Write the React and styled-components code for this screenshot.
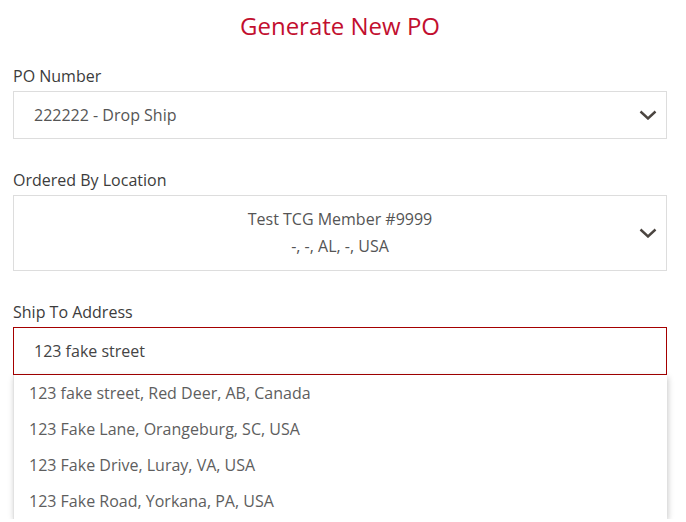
import React from "react";
import styled, { createGlobalStyle } from "styled-components";

const GlobalStyle = createGlobalStyle`
  body {
    margin: 0;
    background: #fff;
    font-family: "Open Sans", "Liberation Sans", sans-serif;
  }
`;

const Page = styled.div`
  padding: 10px 19px 0 13px;
`;

const Title = styled.h1`
  margin: 0 0 23px;
  font-size: 24px;
  line-height: 32px;
  font-weight: 400;
  text-align: center;
  color: #c20f2f;
`;

const Field = styled.div`
  margin-bottom: 30px;
`;

const Label = styled.div`
  font-size: 16px;
  line-height: 22px;
  color: #3c3c3c;
  margin-bottom: 4px;
`;

const Select = styled.div`
  position: relative;
  display: flex;
  align-items: center;
  justify-content: ${({ $center }) => ($center ? "center" : "flex-start")};
  border: 1px solid #ddd;
  padding: ${({ $center }) => ($center ? "10px 40px" : "0 40px 0 20px")};
  height: ${({ $center }) => ($center ? "auto" : "46px")};
  font-size: 16px;
  line-height: 27px;
  color: #555;
`;

const Lines = styled.div`
  text-align: center;
`;

const Chevron = styled.svg`
  position: absolute;
  right: 9px;
  top: 50%;
  margin-top: -5px;
`;

const AutoWrap = styled.div`
  position: relative;
`;

const Input = styled.input`
  display: block;
  box-sizing: border-box;
  width: 100%;
  height: 48px;
  border: 1px solid #a50000;
  padding: 0 20px;
  font-family: inherit;
  font-size: 16px;
  color: #444;
  outline: none;
`;

const Menu = styled.ul`
  list-style: none;
  margin: 0;
  padding: 0;
  border-left: 1px solid #e2e2e2;
  box-shadow: 1px 2px 6px rgba(0, 0, 0, 0.22);
  background: #fff;
`;

const Option = styled.li`
  height: 36px;
  line-height: 36px;
  padding-left: 15px;
  font-size: 16px;
  color: #5e5e5e;
`;

const ChevronIcon = () => (
  <Chevron width="18" height="10" viewBox="0 0 18 10">
    <polyline
      points="1.5,1.5 9,8.5 16.5,1.5"
      fill="none"
      stroke="#4b4540"
      strokeWidth="2.4"
    />
  </Chevron>
);

const suggestions = [
  "123 fake street, Red Deer, AB, Canada",
  "123 Fake Lane, Orangeburg, SC, USA",
  "123 Fake Drive, Luray, VA, USA",
  "123 Fake Road, Yorkana, PA, USA",
];

export default function App() {
  return (
    <Page>
      <GlobalStyle />
      <Title>Generate New PO</Title>

      <Field>
        <Label>PO Number</Label>
        <Select>
          222222 - Drop Ship
          <ChevronIcon />
        </Select>
      </Field>

      <Field>
        <Label>Ordered By Location</Label>
        <Select $center>
          <Lines>
            <div>Test TCG Member #9999</div>
            <div>-, -, AL, -, USA</div>
          </Lines>
          <ChevronIcon />
        </Select>
      </Field>

      <div>
        <Label>Ship To Address</Label>
        <AutoWrap>
          <Input defaultValue="123 fake street" />
          <Menu>
            {suggestions.map((s) => (
              <Option key={s}>{s}</Option>
            ))}
          </Menu>
        </AutoWrap>
      </div>
    </Page>
  );
}
